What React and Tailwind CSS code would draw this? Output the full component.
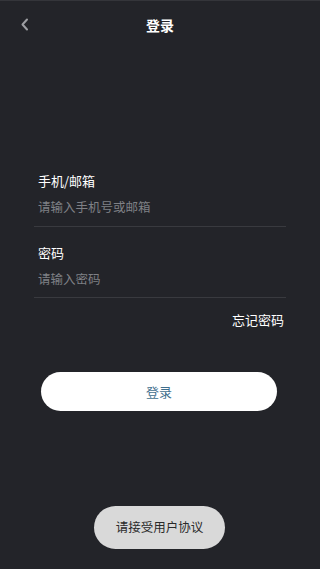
export default function App() {
  const font = { fontFamily: '"Noto Sans CJK SC", "Noto Sans", sans-serif' };
  return (
    <div
      className="relative w-[320px] h-[569px] bg-[#232429] flex flex-col overflow-hidden"
      style={font}
    >
      <div className="h-px bg-[#34353a]" />
      <header className="relative h-[48px] flex items-center justify-center">
        <button className="absolute left-[17px] top-[13px] w-[14px] h-[20px] flex items-center justify-center text-[#9d9ea2]">
          <svg width="9" height="13" viewBox="0 0 9 13" fill="none">
            <path d="M7 1.5L2.5 6.5L7 11.5" stroke="currentColor" strokeWidth="2" strokeLinecap="round" strokeLinejoin="round" />
          </svg>
        </button>
        <h1 className="text-[14px] font-bold text-white leading-none">登录</h1>
      </header>

      <div className="mt-[122px] px-[34px] flex flex-col">
        <div className="border-b border-[#393a3f] pb-[9px]">
          <div className="pl-[4px] text-[13px] text-white leading-[20px]">手机/邮箱</div>
          <div className="pl-[4px] mt-[6px] text-[12.5px] text-[#7f8085] leading-[20px]">请输入手机号或邮箱</div>
        </div>
        <div className="border-b border-[#393a3f] pb-[8px] mt-[16px]">
          <div className="pl-[4px] text-[13px] text-white leading-[20px]">密码</div>
          <div className="pl-[4px] mt-[6px] text-[12.5px] text-[#7f8085] leading-[20px]">请输入密码</div>
        </div>
        <div className="mt-[12px] text-right pr-[2px] text-[13px] text-white leading-[20px]">忘记密码</div>
      </div>

      <div className="mt-[42px] pl-[41px] pr-[43px]">
        <button className="w-full h-[39px] rounded-full bg-white text-[13px] text-[#3f6f8e]">登录</button>
      </div>

      <div className="absolute left-[94px] top-[506px] w-[131px] h-[43px] rounded-full bg-[#d9d9d9] flex items-center justify-center text-[12.5px] text-[#2a2a2a]">
        请接受用户协议
      </div>
    </div>
  );
}
